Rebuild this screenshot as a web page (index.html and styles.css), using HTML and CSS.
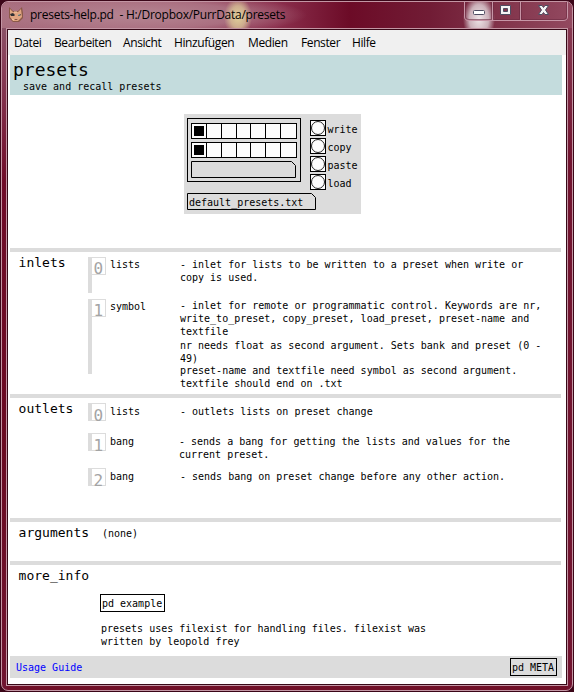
FILE: index.html
```
<!DOCTYPE html>
<html lang="de">
<head>
<meta charset="utf-8">
<title>presets-help.pd</title>
<link rel="stylesheet" href="styles.css">
</head>
<body>
<div class="window">
  <header class="titlebar">
    <svg class="app-icon" width="16" height="16" viewBox="0 0 16 16">
      <path d="M1 0 5 4 10 4 14 0 15 6 15 11 11 15 5 15 1 11Z" fill="#8b5948"/>
      <path d="M2 2 5 5 10 5 13 2 14 10 10 14 5 14 2 10Z" fill="#e0a581"/>
      <path d="M2 7 5 6 7 8 6 9 3 9ZM10 8 13 7 12 9 10 9Z" fill="#2e3034"/>
      <path d="M10 8h2" stroke="#a9bab0"/>
      <path d="M6 12h4l-2 1Z" fill="#63372f"/>
      <path d="M6 5h3M4 12l2 1" stroke="#f5cda8"/>
    </svg>
    <span class="title">presets-help.pd&nbsp; - H:/Dropbox/PurrData/presets</span>
    <svg class="controls" width="104" height="20" viewBox="0 0 104 20">
      <path d="M.5 0V15Q.5 18.500 5 18.500H99Q103.500 18.500 103.500 15V0M28.500 0V18M56.500 0V18" fill="none" stroke="#c795a6"/>
      <path d="M1.500 0V15Q1.500 17.500 5 17.500H27.500V0M29.500 0V17.500H55.500V0M57.500 0V17.500H99Q102.500 17.500 102.500 15V0" fill="none" stroke="#6b2941" opacity=".6"/>
      <rect x="9.500" y="8.500" width="11" height="4" rx="1" fill="#fff" stroke="#4e4c61"/>
      <path d="M36.500 3.500h10v9h-10ZM39.500 6.500v3h4v-3Z" fill="#f5f3f5" fill-rule="evenodd" stroke="#4e4c61"/>
      <path d="M74.500 3.500h3.500l1.500 2 1.500-2h3.500l-3 4.500 3 4.500h-3.500l-1.500-2-1.500 2h-3.500l3-4.500Z" fill="#f5f3f5" stroke="#4e4c61"/>
    </svg>
  </header>
  <div class="client">
    <nav class="menu">
      <span>Datei</span><span>Bearbeiten</span><span>Ansicht</span><span>Hinzufügen</span><span>Medien</span><span>Fenster</span><span>Hilfe</span>
    </nav>
    <main class="patch">
      <div class="heading">
        <h1>presets</h1>
        <p>save and recall presets</p>
      </div>
      <div class="demo">
        <div class="panel">
          <div class="left">
            <div class="bank">
              <div class="radio"><i class="on"></i><i></i><i></i><i></i><i></i><i></i><i></i></div>
              <div class="radio"><i class="on"></i><i></i><i></i><i></i><i></i><i></i><i></i></div>
              <svg class="slot" width="105" height="17"><path d="M.5.5H100.500L104.500 4.500V16.500H.5Z" fill="none" stroke="#000"/></svg>
            </div>
            <div class="file">
              <svg width="129" height="17"><path d="M.5.5H124.500L128.500 4.500V16.500H.5Z" fill="none" stroke="#000"/></svg>
              <span>default_presets.txt</span>
            </div>
          </div>
          <div class="bangs">
            <div class="bang"><b></b><span>write</span></div>
            <div class="bang"><b></b><span>copy</span></div>
            <div class="bang"><b></b><span>paste</span></div>
            <div class="bang"><b></b><span>load</span></div>
          </div>
        </div>
      </div>
      <section class="inlets">
        <h2>inlets</h2>
        <div class="entries">
          <div class="entry in0"><div class="port"><span>0</span></div><div class="kind">lists</div>
            <div class="desc"><p>- inlet for lists to be written to a preset when write or<br>copy is used.</p></div></div>
          <div class="entry in1"><div class="port"><span>1</span></div><div class="kind">symbol</div>
            <div class="desc"><p>- inlet for remote or programmatic control. Keywords are nr,<br>write_to_preset, copy_preset, load_preset, preset-name and<br>textfile</p><p class="nr">nr needs float as second argument. Sets bank and preset (0 -<br>49)</p><p class="names">preset-name and textfile need symbol as second argument.<br>textfile should end on .txt</p></div></div>
        </div>
      </section>
      <section class="outlets">
        <h2>outlets</h2>
        <div class="entries">
          <div class="entry out0"><div class="port"><span>0</span></div><div class="kind">lists</div>
            <div class="desc"><p>- outlets lists on preset change</p></div></div>
          <div class="entry out1"><div class="port"><span>1</span></div><div class="kind">bang</div>
            <div class="desc"><p>- sends a bang for getting the lists and values for the<br>current preset.</p></div></div>
          <div class="entry out2"><div class="port"><span>2</span></div><div class="kind">bang</div>
            <div class="desc"><p>- sends bang on preset change before any other action.</p></div></div>
        </div>
      </section>
      <section class="arguments">
        <h2>arguments</h2>
        <p class="none">(none)</p>
      </section>
      <section class="more">
        <h2>more_info</h2>
        <div class="info">
          <div class="object">pd example</div>
          <p>presets uses filexist for handling files. filexist was<br>written by leopold frey</p>
        </div>
      </section>
      <footer>
        <span class="guide">Usage Guide</span>
        <div class="object">pd META</div>
      </footer>
    </main>
  </div>
</div>
</body>
</html>
```
FILE: styles.css
```
*, *::before { box-sizing: border-box; margin: 0; padding: 0; }
body {
  display: flow-root;
  width: 574px;
  height: 692px;
  overflow: hidden;
  background: #3b0618;
  font: 10px/13px "DejaVu Sans Mono", monospace;
  color: #000;
}
.window {
  height: 690px;
  margin: 1px 1px 0;
  padding: 0 5px 4px;
  border: 1px solid #c396a4;
  border-radius: 7px;
  background:
    linear-gradient(#8a6070 0, #8a405a 60px, #700c29 180px, #6a0a22 450px, #701530 100%) left / 5px 100% no-repeat,
    linear-gradient(#8b4058, #721430 160px, #721430) right / 5px 100% no-repeat,
    #701028;
  background-origin: padding-box;
}
.titlebar {
  display: flex;
  align-items: flex-start;
  height: 26px;
  margin: 0 -5px;
  padding-left: 6px;
  border-radius: 6px 6px 0 0;
  background:
    radial-gradient(ellipse 14px 20px at 236px 15px, #e0cf98 0, #d8bf95cc 55%, transparent 100%),
    radial-gradient(ellipse 16px 24px at 477px 17px, #eee5e8 0, #d8c5ccdd 60%, transparent 100%),
    radial-gradient(ellipse 165px 22px at 140px 13px, #b58592 0, #b07b8acc 60%, transparent 100%),
    linear-gradient(90deg, #a96f7f 0, #8c304e 48%, #6c0b27 61%, #711c35 75%, #85384f 90%, #934960 100%);
}
.app-icon { margin: 5px 6px 0 0; }
.title {
  width: 420px;
  padding-top: 5px;
  font: 12px/16px "Open Sans", "Noto Sans", sans-serif;
  letter-spacing: -.26px;
  white-space: nowrap;
}
.controls { margin-left: 14px; }
.client {
  height: 658px;
  margin: 0 -1px;
  border: 1px solid #c396a4;
  outline: 1px solid #370817;
  outline-offset: -2px;
  padding: 1px;
  background: #fff;
}
.menu {
  display: grid;
  grid-template-columns: 40px 69px 51px 74px 53px 51px 40px;
  height: 25px;
  padding: 5px 0 0 6px;
  background: #f0f0f0;
  font: 12px/16px "Open Sans", "Noto Sans", sans-serif;
  letter-spacing: -.4px;
  white-space: nowrap;
}
.patch { width: 552px; margin-left: 2px; }
.heading { height: 40px; padding: 4px 0 0 3px; background: #c4dcdd; }
h1 { font-size: 18px; line-height: 21px; font-weight: 400; }
.heading p { padding-left: 10px; }
.demo { height: 153px; padding: 19px 0 0 174px; }
.panel {
  display: flex;
  gap: 9px;
  width: 177px;
  height: 100px;
  padding: 4px 0 0 3px;
  background: #dcdcdc;
}
.left { display: flex; flex-direction: column; gap: 11px; width: 114px; }
.bank {
  display: flex;
  flex-direction: column;
  gap: 3px;
  height: 64px;
  padding: 4px 3px 0;
  border: 1px solid #000;
}
.radio {
  display: flex;
  width: 106px;
  height: 16px;
  border: 1px solid #000;
  background: #fcfcfc;
}
.radio i { width: 15px; height: 14px; border-right: 1px solid #000; }
.radio i:last-child { border-right: 0; }
.radio .on { padding: 2px; }
.radio .on::before { content: ""; display: block; width: 10px; height: 10px; background: #000; }
.slot { display: block; flex: none; }
.file { display: grid; width: 129px; height: 17px; }
.file > * { grid-area: 1 / 1; }
.file span { padding: 3px 0 0 2px; }
.bangs { display: flex; flex-direction: column; gap: 2px; padding-top: 2px; }
.bang { display: flex; gap: 1.500px; height: 16px; }
.bang b { flex: none; width: 16px; height: 16px; border: 1px solid #000; background: #fcfcfc; }
.bang b::before {
  content: "";
  display: block;
  width: 14px;
  height: 14px;
  border: 1px solid #222;
  border-radius: 50%;
}
.bang span { padding-top: 3px; }
section { display: flex; width: 551px; border-top: 4px solid #dcdcdc; }
h2 { width: 78px; padding: 3px 0 0 8.600px; font-size: 13px; line-height: 15px; font-weight: 400; white-space: nowrap; }
.inlets { height: 146px; }
.outlets { height: 124px; }
.arguments { height: 43px; }
.more { height: 95px; }
.entries { padding-top: 5px; }
.entry { display: grid; grid-template-columns: 18px 73px 380px; align-items: start; white-space: nowrap; }
.port { height: 18px; border-left: 4px solid #dcdcdc; }
.port span {
  display: block;
  width: 14px;
  height: 18px;
  padding-left: 1.400px;
  border: 1px solid #dcdcdc;
  border-left: 0;
  font-size: 16px;
  line-height: 21px;
  color: #a4a4a4;
}
.kind { padding: 1px 0 0 4px; }
.desc { padding: 1px 0 0 1px; }
.in0 { height: 42px; }
.in0 .port { height: 36px; }
.in1 .port { height: 75px; }
.in1 .desc { padding-top: 0; }
.nr { margin-top: 1px; }
.names { margin-top: -1px; }
.out0 { height: 30px; }
.out1 { height: 35px; }
.out0 .kind, .out0 .desc, .out1 .kind, .out1 .desc, .out2 .kind, .out2 .desc { padding-top: 2px; }
.out1 .desc { padding-left: 0; }
.outlets .port span { line-height: 24px; }
.none { padding: 5px 0 0 14px; }
.object {
  height: 18px;
  padding: 2px 1px 0;
  border: 1px solid #000;
  white-space: nowrap;
}
.info { padding: 29px 0 0 12px; }
.info .object { width: 65px; }
.info p { padding: 10px 0 0 1px; white-space: nowrap; }
footer {
  display: flex;
  justify-content: space-between;
  height: 22px;
  padding: 2px 5px 0 6px;
  background: #dcdcdc;
}
footer .object { width: 47px; }
.guide { padding-top: 3px; color: #00f; }
```
